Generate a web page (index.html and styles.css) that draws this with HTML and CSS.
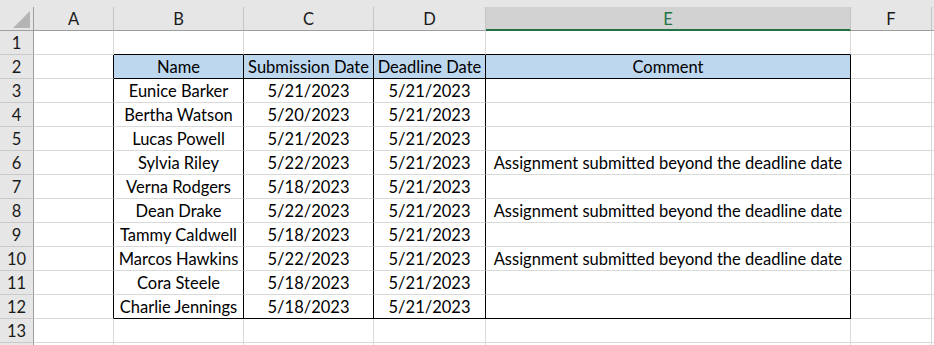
FILE: index.html
```html
<!DOCTYPE html>
<html>
<head>
<meta charset="utf-8">
<link rel="stylesheet" href="styles.css">
</head>
<body>
<div class="sheet">
  <div class="strip"></div>

  <div class="hd corner"><svg class="tri" width="17" height="17" viewBox="0 0 17 17"><polygon points="17,0 17,17 0,17" fill="#b4b4b4"/></svg></div>
  <div class="hd">A</div><div class="hd">B</div><div class="hd">C</div><div class="hd">D</div><div class="hd sel">E</div><div class="hd">F</div><div class="hd last"></div>

  <div class="rh">1</div><div class="c"></div><div class="c tt"></div><div class="c tt"></div><div class="c tt"></div><div class="c tt"></div><div class="c"></div><div class="c last"></div>

  <div class="rh">2</div><div class="c tl"></div><div class="c tb th">Name</div><div class="c tb th">Submission Date</div><div class="c tb th">Deadline Date</div><div class="c tb th">Comment</div><div class="c"></div><div class="c last"></div>

  <div class="rh">3</div><div class="c tl"></div><div class="c tb">Eunice Barker</div><div class="c tb">5/21/2023</div><div class="c tb">5/21/2023</div><div class="c tb"></div><div class="c"></div><div class="c last"></div>

  <div class="rh">4</div><div class="c tl"></div><div class="c tb">Bertha Watson</div><div class="c tb">5/20/2023</div><div class="c tb">5/21/2023</div><div class="c tb"></div><div class="c"></div><div class="c last"></div>

  <div class="rh">5</div><div class="c tl"></div><div class="c tb">Lucas Powell</div><div class="c tb">5/21/2023</div><div class="c tb">5/21/2023</div><div class="c tb"></div><div class="c"></div><div class="c last"></div>

  <div class="rh">6</div><div class="c tl"></div><div class="c tb">Sylvia Riley</div><div class="c tb">5/22/2023</div><div class="c tb">5/21/2023</div><div class="c tb">Assignment submitted beyond the deadline date</div><div class="c"></div><div class="c last"></div>

  <div class="rh">7</div><div class="c tl"></div><div class="c tb">Verna Rodgers</div><div class="c tb">5/18/2023</div><div class="c tb">5/21/2023</div><div class="c tb"></div><div class="c"></div><div class="c last"></div>

  <div class="rh">8</div><div class="c tl"></div><div class="c tb">Dean Drake</div><div class="c tb">5/22/2023</div><div class="c tb">5/21/2023</div><div class="c tb">Assignment submitted beyond the deadline date</div><div class="c"></div><div class="c last"></div>

  <div class="rh">9</div><div class="c tl"></div><div class="c tb">Tammy Caldwell</div><div class="c tb">5/18/2023</div><div class="c tb">5/21/2023</div><div class="c tb"></div><div class="c"></div><div class="c last"></div>

  <div class="rh">10</div><div class="c tl"></div><div class="c tb">Marcos Hawkins</div><div class="c tb">5/22/2023</div><div class="c tb">5/21/2023</div><div class="c tb">Assignment submitted beyond the deadline date</div><div class="c"></div><div class="c last"></div>

  <div class="rh">11</div><div class="c tl"></div><div class="c tb">Cora Steele</div><div class="c tb">5/18/2023</div><div class="c tb">5/21/2023</div><div class="c tb"></div><div class="c"></div><div class="c last"></div>

  <div class="rh">12</div><div class="c tl"></div><div class="c tb bot">Charlie Jennings</div><div class="c tb bot">5/18/2023</div><div class="c tb bot">5/21/2023</div><div class="c tb bot"></div><div class="c"></div><div class="c last"></div>

  <div class="rh">13</div><div class="c"></div><div class="c"></div><div class="c"></div><div class="c"></div><div class="c"></div><div class="c"></div><div class="c last"></div>

  <div class="rh"></div><div class="c"></div><div class="c"></div><div class="c"></div><div class="c"></div><div class="c"></div><div class="c"></div><div class="c last"></div>
</div>
</body>
</html>
```

FILE: styles.css
```css
html, body {
  margin: 0;
  padding: 0;
  background: #ffffff;
  overflow: hidden;
}

.sheet {
  display: grid;
  grid-template-columns: 34px 80px 130px 130px 112px 365px 81px 1fr;
  grid-template-rows: 7px 24px repeat(14, 24px);
  width: 934px;
  height: 345px;
  overflow: hidden;
  font-family: Lato, "Liberation Sans", sans-serif;
  font-size: 16.5px;
  color: #000000;
}

.sheet > div {
  box-sizing: border-box;
  min-width: 0;
  white-space: nowrap;
  overflow: hidden;
}

.strip {
  grid-column: 1 / -1;
  background: #e6e6e6;
}

.hd {
  background: #e6e6e6;
  border-right: 1px solid #c4c4c4;
  border-bottom: 1px solid #9e9e9e;
  text-align: center;
  line-height: 24px;
  font-size: 16.5px;
  color: #1a1a1a;
}

.hd.corner {
  position: relative;
  border-right: 1px solid #9e9e9e;
}

.tri {
  position: absolute;
  left: 13px;
  top: 4px;
}

.hd.sel {
  background: #d2d2d2;
  border-bottom: 2px solid #217346;
  color: #217346;
  line-height: 24px;
}

.hd.last {
  border-right: none;
}

.rh {
  background: #e6e6e6;
  border-right: 1px solid #9e9e9e;
  border-bottom: 1px solid #cacaca;
  text-align: center;
  line-height: 24px;
  font-size: 16.5px;
  color: #1a1a1a;
}

.c {
  border-right: 1px solid #d9d9d9;
  border-bottom: 1px solid #d9d9d9;
  text-align: center;
  line-height: 24px;
}

.c.last {
  border-right: none;
}

.c.tt {
  border-bottom-color: #000000;
}

.c.tl {
  border-right-color: #000000;
}

.c.tb {
  border-right-color: #000000;
}

.c.th {
  background: #bdd7ee;
  border-bottom-color: #000000;
}

.c.bot {
  border-bottom-color: #000000;
}
```
